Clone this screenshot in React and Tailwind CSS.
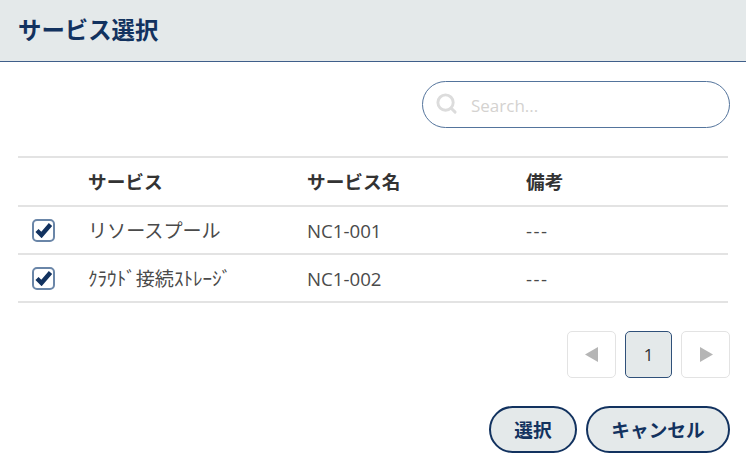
import React from "react";
import { Search } from "lucide-react";

const rows = [
  { name: "リソースプール", code: "NC1-001" },
  { name: "ｸﾗｳﾄﾞ接続ｽﾄﾚｰｼﾞ", code: "NC1-002" },
];

const Check = () => (
  <span className="w-[23px] h-[23px] rounded-[5px] border-2 border-[#6a86a8] bg-white flex items-center justify-center">
    <svg width="18" height="16" viewBox="0 0 18 16">
      <path d="M2 8.5 L6.5 13 L15.5 2.5" fill="none" stroke="#12325f" strokeWidth="4.4" />
    </svg>
  </span>
);

export default function App() {
  return (
    <div className="w-[746px] h-[474px] bg-white overflow-hidden font-['Open_Sans','Noto_Sans_CJK_JP',sans-serif]">
      <header className="h-[62px] bg-[#e4e9ea] border-b border-[#3f5f8a] px-[18px] flex items-center">
        <h1 className="text-[23.4px] font-bold text-[#12325f]">サービス選択</h1>
      </header>

      <div className="flex justify-end px-4 pt-[19px] pb-7">
        <div className="w-[308px] h-[47px] rounded-full border border-[#54749c] flex items-center pl-3 gap-[13px]">
          <Search size={23} strokeWidth={3} className="text-[#dcdcdc] -mt-0.5" />
          <span className="text-[17px] text-[#d4d2d0] pt-0.5">Search...</span>
        </div>
      </div>

      <div className="mx-[18px] border-t-2 border-[#e3e3e3] text-[18.67px] text-[#4a4a4a]">
        <div className="flex items-center h-[49px] border-b-2 border-[#e3e3e3] font-bold text-[#333]">
          <span className="w-[70px]" />
          <span className="w-[219px]">サービス</span>
          <span className="w-[219px]">サービス名</span>
          <span>備考</span>
        </div>
        {rows.map((row) => (
          <div key={row.code} className="flex items-center h-[48px] border-b-2 border-[#e3e3e3]">
            <span className="w-[70px] pl-[14px]">
              <Check />
            </span>
            <span className="w-[219px] text-[19.1px] pt-0.5">{row.name}</span>
            <span className="w-[219px] pt-0.5">{row.code}</span>
            <span className="tracking-[1.5px] pt-0.5">---</span>
          </div>
        ))}
      </div>

      <div className="flex justify-end gap-[9px] px-4 pt-[28px]">
        <button className="w-[49px] h-[47px] rounded-[5px] border border-[#e3e3e3] bg-white flex items-center justify-center">
          <svg width="14" height="15" viewBox="0 0 14 15"><path d="M0 7.5 L13 0 V15 Z" fill="#b5b5b5" /></svg>
        </button>
        <button className="w-[47px] h-[47px] rounded-[5px] border border-[#2f5079] bg-[#e4e9ea] text-[17px] text-[#333]">1</button>
        <button className="w-[49px] h-[47px] rounded-[5px] border border-[#e3e3e3] bg-white flex items-center justify-center">
          <svg width="14" height="15" viewBox="0 0 14 15"><path d="M14 7.5 L1 0 V15 Z" fill="#b5b5b5" /></svg>
        </button>
      </div>

      <div className="flex justify-end gap-[9px] px-4 pt-[28px]">
        <button className="w-[88px] h-[47px] rounded-full border-2 border-[#12325f] bg-[#e4e9ea] text-[18.67px] font-bold text-[#12325f]">選択</button>
        <button className="w-[144px] h-[47px] rounded-full border-2 border-[#12325f] bg-[#e4e9ea] text-[18.67px] font-bold text-[#12325f]">キャンセル</button>
      </div>
    </div>
  );
}
